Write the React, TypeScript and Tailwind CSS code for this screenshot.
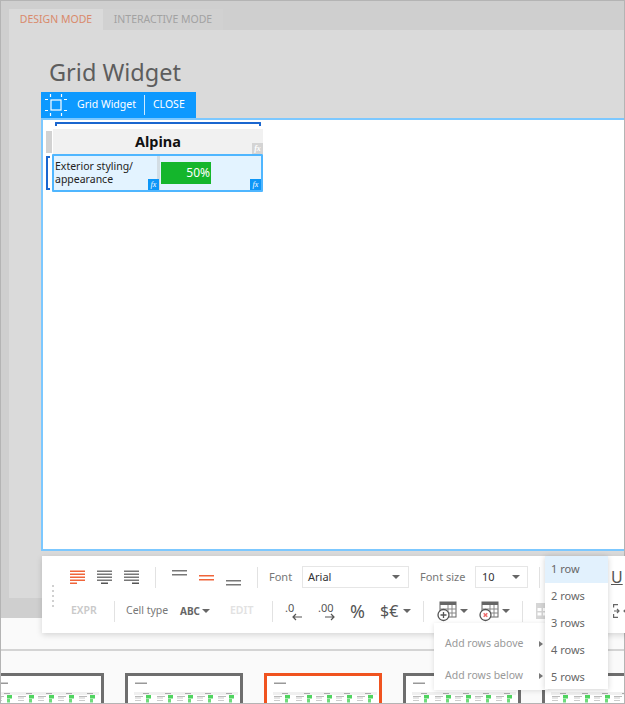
import React from "react"

const font = { fontFamily: '"Noto Sans", "Open Sans", sans-serif' }

function Fx({ muted, className = "right-0" }: { muted?: boolean; className?: string }) {
  return (
    <div
      className={`absolute bottom-0 w-[11px] h-[11px] flex items-center justify-center text-[8px] leading-none italic text-white ${
        muted ? "bg-[#d4d4d4]" : "bg-[#0d96f7]"
      } ${className}`}
      style={{ fontFamily: '"Liberation Serif", serif' }}
    >
      fx
    </div>
  )
}

// horizontal align icons: widths of the text lines
function AlignIcon({ color, side }: { color: string; side: "left" | "center" | "right" }) {
  const rows = [15, 15, 15, 15, 7]
  return (
    <svg width="15" height="17" viewBox="0 0 15 17">
      {rows.map((w, i) => {
        const x = side === "left" ? 0 : side === "center" ? (15 - w) / 2 : 15 - w
        const fill = i === 4 && side !== "left" ? "#555" : color
        return <rect key={i} x={x} y={i * 3 + 1.5} width={w} height="1.5" fill={fill} />
      })}
    </svg>
  )
}

function ValignIcon({ color, pos }: { color: string; pos: number }) {
  return (
    <svg width="15" height="22" viewBox="0 0 15 22">
      <rect x="0" y={pos} width="15" height="1.5" fill={color} />
      <rect x="0" y={pos + 4} width="15" height="1.5" fill={color} />
    </svg>
  )
}

function Sep({ className = "" }: { className?: string }) {
  return <div className={`w-px h-[21px] bg-[#e2e2e2] shrink-0 ${className}`} />
}

function Caret({ className = "" }: { className?: string }) {
  return <div className={`w-0 h-0 border-x-[4px] border-x-transparent border-t-[4px] border-t-[#666] ${className}`} />
}

function TableBadgeIcon({ kind }: { kind: "add" | "remove" }) {
  return (
    <svg width="20" height="21" viewBox="0 0 20 21">
      <rect x="3" y="1" width="16" height="15" fill="#fff" stroke="#666" strokeWidth="1" />
      <rect x="3" y="1" width="16" height="3" fill="#666" />
      <path d="M11 4v12M15 4v12M3 8h16M3 12h16" stroke="#888" strokeWidth="1" />
      <circle cx="6.500" cy="14" r="5.500" fill="#fff" stroke="#555" strokeWidth="1.3" />
      {kind === "add" ? (
        <path d="M6.500 11v6M3.500 14h6" stroke="#555" strokeWidth="1.3" />
      ) : (
        <path d="M4.700 12.200l3.600 3.600M8.300 12.200l-3.600 3.600" stroke="#ee6a6a" strokeWidth="1.5" />
      )}
    </svg>
  )
}

function Thumb({ accent, className = "" }: { accent?: boolean; className?: string }) {
  const columns = [19, 41, 61, 81, 102]
  return (
    <div
      className={`shrink-0 w-[118px] h-[40px] border-[3px] border-b-0 bg-white ${
        accent ? "border-[#f0531f]" : "border-[#6e6e6e]"
      } ${className}`}
    >
      <svg width="112" height="37" viewBox="0 0 112 37">
        <rect x="7" y="6.500" width="12" height="1.500" fill="#999" />
        <rect x="6" y="16" width="104" height="3" fill="#f0f0f0" />
        {columns.map((x) => (
          <g key={x}>
            <rect x={x - 4} y="17" width="6" height="1" fill="#aaa" />
            <rect x={x - 12} y="20" width="8" height="1" fill="#bbb" />
            <rect x={x - 12} y="21.500" width="6" height="1" fill="#ccc" />
            <rect x={x - 1} y="19" width="5" height="3.500" fill="#4fd45f" />
            <rect x={x - 12} y="24" width="6" height="1" fill="#ccc" />
            <rect x={x - 1} y="23" width="3" height="3.500" fill="#6fdc7d" />
          </g>
        ))}
      </svg>
    </div>
  )
}

export default function App() {
  return (
    <div className="relative w-[625px] h-[704px] overflow-hidden bg-[#fafafa] text-[#555]" style={font}>
      {/* Editor backdrop */}
      <div className="h-[618px] bg-[#cfcfcf] border-t border-x border-[#b4b4b4] pl-2 pt-2">
        <div className="flex h-[21px] text-[10.5px]">
          <div className="w-[94px] flex items-center justify-center bg-[#dadada] text-[#d98a6c]">DESIGN MODE</div>
          <div className="w-[120px] flex items-center justify-center bg-[#d1d1d1] text-[#a2a2a2]">INTERACTIVE MODE</div>
        </div>
        <div className="h-[568px] bg-[#dadada] pl-8">
          <div className="h-[62px] pt-[26px] pl-2 text-[23.5px] leading-[32px] text-[#5d5d5d]">Grid Widget</div>

          <div className="flex items-center w-[155px] h-[26px] bg-[#0d99ff] text-white text-[10.5px]">
            <svg className="ml-[4px]" width="22" height="22" viewBox="0 0 22 22" fill="none" stroke="#fff">
              <rect x="6" y="6" width="10" height="10" strokeWidth="1.200" />
              <path d="M0 5.500h3M0 16.500h3M19 5.500h3M19 16.500h3M5.500 0v3M16.500 0v3M5.500 19v3M16.500 19v3" strokeWidth="1.200" />
            </svg>
            <span className="ml-[10px]">Grid Widget</span>
            <div className="w-px h-[20px] bg-white/80 ml-2" />
            <span className="ml-2">CLOSE</span>
          </div>

          {/* Widget canvas */}
          <div className="h-[433px] bg-white border-2 border-r-0 border-[#7cc8ff] pt-[2px]">
            <div className="ml-[12px] w-[206px] h-[4px] border-t-2 border-x-2 border-[#1a66cf] rounded-t-[1px]" />
            <div className="flex ml-[3px] mt-[3px]">
              <div className="w-[6px] h-[22px] mt-[2px] bg-[#d2d2d2]" />
              <div className="relative ml-[1px] w-[210px] h-[25px] bg-[#f1f1f1] flex items-center justify-center text-[14.5px] font-bold text-[#111]">
                Alpina
                <Fx muted />
              </div>
            </div>
            <div className="flex ml-[3px]">
              <div className="w-[4px] h-[34px] mt-[2px] border-l-2 border-y-2 border-[#1a66cf]" />
              <div className="relative ml-[2px] w-[211px] h-[38px] bg-[#e3f3ff] border-2 border-[#4fb6ff] rounded-[1px] flex">
                <div className="w-[103px] pl-[1px] pt-[4px] text-[10.5px] leading-[13px] text-[#222]">
                  Exterior styling/
                  <br />
                  appearance
                </div>
                <div className="w-[3px] bg-[#d3dde4]" />
                <div className="ml-px mt-[6px] w-[50px] h-[22px] bg-[#14b62c] flex items-center justify-end pr-[1px] text-[12px] text-white">
                  50%
                </div>
                <Fx className="left-[94px]" />
                <Fx />
              </div>
            </div>
          </div>
        </div>
      </div>

      {/* Slide strip */}
      <div className="h-[86px] bg-[#fafafa]">
        <div className="h-[33px] border-b-2 border-[#d4d4d4]" />
        <div className="mt-[22px] flex gap-[21px] -ml-[14px]">
          <Thumb />
          <Thumb />
          <Thumb accent />
          <Thumb />
          <Thumb />
        </div>
      </div>
      <div className="absolute left-0 top-0 w-px h-full bg-[#b4b4b4]" />
      <div className="absolute right-0 top-0 w-px h-full bg-[#b4b4b4]" />
      <div className="absolute left-0 bottom-0 w-full h-px bg-[#b4b4b4]" />

      {/* Floating toolbar */}
      <div className="absolute left-[42px] top-[556px] w-[600px] h-[77px] bg-white shadow-[0_2px_6px_rgba(0,0,0,0.15)] text-[10.5px]">
        <div className="absolute left-[10px] top-[29px] flex flex-col gap-[3px]">
          {[0, 1, 2, 3, 4].map((i) => (
            <div key={i} className="w-[2px] h-[2px] bg-[#d0d0d0]" />
          ))}
        </div>

        <div className="flex items-center h-[42px] pl-[28px]">
          <AlignIcon color="#f0653a" side="left" />
          <div className="ml-[12px]"><AlignIcon color="#777" side="center" /></div>
          <div className="ml-[12px]"><AlignIcon color="#777" side="right" /></div>
          <Sep className="ml-[16px]" />
          <div className="ml-4"><ValignIcon color="#777" pos={4} /></div>
          <div className="ml-3"><ValignIcon color="#f0653a" pos={9} /></div>
          <div className="ml-3"><ValignIcon color="#777" pos={14} /></div>
          <Sep className="ml-4" />
          <span className="ml-[11px] w-[33px] text-[#777] text-[11px]">Font</span>
          <div className="w-[107px] h-[22px] border border-[#e6e6e6] flex items-center justify-between pl-[5px] pr-[8px] text-[11px] text-[#333]">
            Arial
            <Caret />
          </div>
          <span className="ml-[11px] w-[55px] text-[#777] text-[11px]">Font size</span>
          <div className="w-[53px] h-[22px] border border-[#e6e6e6] flex items-center justify-between pl-[6px] pr-[7px] text-[11px] text-[#333]">
            10
            <Caret />
          </div>
          <Sep className="ml-[11px]" />
          <span className="ml-[71px] text-[16px] underline text-[#555]">U</span>
        </div>

        <div className="flex items-center h-[26px] pl-[29px]">
          <span className="w-[27px] font-semibold text-[#c9c9c9]">EXPR</span>
          <Sep className="ml-[16px]" />
          <span className="ml-[11px] w-[54px] text-[#777] whitespace-nowrap">Cell type</span>
          <span className="text-[10px] font-bold text-[#666]">ABC</span>
          <Caret className="ml-[2px]" />
          <span className="ml-[20px] w-[24px] font-semibold text-[#e2e2e2]">EDIT</span>
          <Sep className="ml-[18px]" />
          <div className="ml-[12px] w-[18px] h-[22px] relative text-[#555] text-[11px] leading-[16px]">
            .0
            <svg className="absolute left-[7px] top-[13px]" width="10" height="8" viewBox="0 0 10 8" fill="none" stroke="#555" strokeWidth="1.2">
              <path d="M10 4H1M4 1L1 4l3 3" />
            </svg>
          </div>
          <div className="ml-[15px] w-[18px] h-[22px] relative text-[#555] text-[11px] leading-[16px]">
            .00
            <svg className="absolute left-[7px] top-[13px]" width="10" height="8" viewBox="0 0 10 8" fill="none" stroke="#555" strokeWidth="1.2">
              <path d="M0 4h9M6 1l3 3-3 3" />
            </svg>
          </div>
          <span className="ml-[14px] w-[16px] text-[18px] text-[#555] leading-none">%</span>
          <span className="ml-[14px] w-[22px] text-[16px] text-[#555] leading-none">$€</span>
          <Caret className="ml-[1px]" />
          <Sep className="ml-[12px]" />
          <div className="ml-[13px]"><TableBadgeIcon kind="add" /></div>
          <Caret className="ml-[3px]" />
          <div className="ml-[11px]"><TableBadgeIcon kind="remove" /></div>
          <Caret className="ml-[3px]" />
          <Sep className="ml-[12px]" />
          <svg className="ml-[13px]" width="17" height="16" viewBox="0 0 17 16" fill="#d6d6d6">
            <path d="M0 0h17v16H0zM1.500 5v3h4V5zm5.500 0v3h3V5zm4.500 0v3h4V5zm-10 4.500v3h4v-3zm5.500 0v3h3v-3zm4.500 0v3h4v-3z" fillRule="evenodd" />
          </svg>
          <svg className="ml-[60px]" width="17" height="14" viewBox="0 0 17 14" fill="none" stroke="#666" strokeWidth="1.2">
            <path d="M5 .6H.6v3M.6 10v3.400H5M12 .6h4.400v3M16.400 10v3.400H12M1 7h5M4 5l2 2-2 2M16 7h-5M13 5l-2 2 2 2" />
          </svg>
        </div>
      </div>

      {/* Add rows menu */}
      <div className="absolute left-[434px] top-[623px] w-[114px] h-[67px] bg-white shadow-[0_1px_5px_rgba(0,0,0,0.12)] flex flex-col gap-[16px] pt-[13px] pl-[11px] text-[10.5px] text-[#999]">
        {["Add rows above", "Add rows below"].map((label) => (
          <div key={label} className="h-[16px] flex items-center justify-between pr-[5px]">
            {label}
            <div className="w-0 h-0 border-y-[3.500px] border-y-transparent border-l-[4px] border-l-[#777]" />
          </div>
        ))}
      </div>

      {/* Rows count menu */}
      <div className="absolute left-[545px] top-[556px] w-[63px] h-[133px] bg-white shadow-[0_1px_6px_rgba(0,0,0,0.18)] text-[11px] text-[#666]">
        {["1 row", "2 rows", "3 rows", "4 rows", "5 rows"].map((label, i) => (
          <div key={label} className={`h-[27px] pl-[6px] flex items-center ${i === 0 ? "bg-[#e2f1fd]" : ""}`}>
            {label}
          </div>
        ))}
      </div>
    </div>
  )
}
